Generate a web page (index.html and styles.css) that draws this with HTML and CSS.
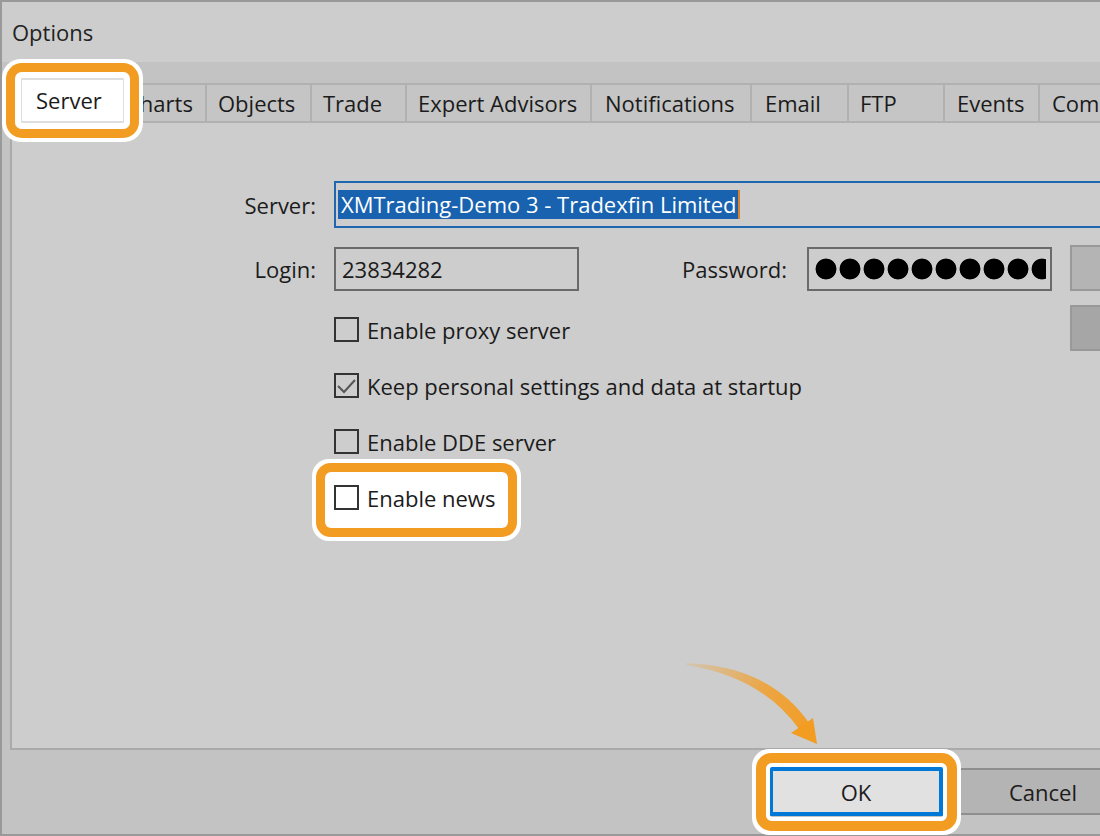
FILE: index.html
```html
<!DOCTYPE html>
<html lang="en">
<head>
<meta charset="utf-8">
<title>Options</title>
<link rel="stylesheet" href="styles.css">
</head>
<body>
<div class="window">
  <div class="titlebar">Options</div>
  <div class="dlg">
    <div class="tabs">
      <div class="tab sel">Server</div>
      <div class="tab t-charts">Charts</div>
      <div class="tab t-objects">Objects</div>
      <div class="tab t-trade">Trade</div>
      <div class="tab t-expert">Expert Advisors</div>
      <div class="tab t-notif">Notifications</div>
      <div class="tab t-email">Email</div>
      <div class="tab t-ftp">FTP</div>
      <div class="tab t-events">Events</div>
      <div class="tab t-comm">Com</div>
    </div>
    <div class="panel">
      <div class="form">
        <div class="lbl l-server">Server:</div>
        <div class="input server"><span class="selection">XMTrading-Demo 3 - Tradexfin Limited</span></div>
        <div class="lbl l-login">Login:</div>
        <div class="input login">23834282</div>
        <div class="lbl l-pw">Password:</div>
        <div class="input pwd"><div class="dots"></div></div>
        <div class="side">
          <div class="sbtn"></div>
          <div class="sbtn dark"></div>
        </div>
        <div class="checks">
          <div class="cb"><span class="box"></span><span>Enable proxy server</span></div>
          <div class="cb"><span class="box"><svg viewBox="0 0 21 21" width="21" height="21"><polyline points="2,11 8,17 19,5" fill="none" stroke="#555" stroke-width="2"/></svg></span><span>Keep personal settings and data at startup</span></div>
          <div class="cb"><span class="box"></span><span>Enable DDE server</span></div>
          <div class="cb hl"><span class="box"></span><span>Enable news</span></div>
        </div>
      </div>
    </div>
    <div class="footer">
      <div class="btn ok">OK</div>
      <div class="btn cancel">Cancel</div>
    </div>
  </div>
</div>
<svg class="arrow" width="1100" height="836" viewBox="0 0 1100 836">
  <defs>
    <linearGradient id="ag" x1="686" y1="664" x2="810" y2="740" gradientUnits="userSpaceOnUse">
      <stop offset="0" stop-color="#f39c22" stop-opacity="0.15"/>
      <stop offset="0.55" stop-color="#f39c22" stop-opacity="0.8"/>
      <stop offset="1" stop-color="#f39c22" stop-opacity="1"/>
    </linearGradient>
  </defs>
  <path d="M686,663 Q770,666 809,723 L799,729 Q762,677 686,665 Z" fill="url(#ag)"/>
  <polygon points="791,733 813,718 817,744" fill="#f39c22"/>
</svg>
</body>
</html>
```
FILE: styles.css
```css
* { box-sizing: border-box; }
html, body { margin: 0; padding: 0; }
body {
  width: 1100px;
  height: 836px;
  overflow: hidden;
  position: relative;
  font-family: "Open Sans", "Noto Sans", sans-serif;
  font-size: 22px;
  color: #1b1b1b;
  background: #c3c3c3;
}
.window {
  width: 1220px;
  height: 836px;
  border: 2px solid #999;
  border-right: none;
  background: #c3c3c3;
  display: flex;
  flex-direction: column;
}
.titlebar {
  height: 60px;
  background: #cdcdcd;
  padding-left: 10px;
  display: flex;
  align-items: center;
  color: #222;
}
.dlg {
  flex: 1;
  padding: 21px 0 0 8px;
  display: flex;
  flex-direction: column;
}
.tabs {
  display: flex;
  align-items: flex-start;
  height: 38px;
  border-top: 2px solid #b1b1b1;
  background: #c5c5c5;
}
.tab {
  flex: none;
  height: 36px;
  border-left: 2px solid #b1b1b1;
  padding-left: 11px;
  display: flex;
  align-items: center;
  white-space: nowrap;
  overflow: hidden;
}
.tab.sel {
  position: relative;
  z-index: 3;
  width: 105px;
  height: 45px;
  margin: -7px -12px 0 10px;
  background: #fff;
  border: 2px solid #dedede;
  padding-left: 14px;
  padding-bottom: 2px;
  overflow: visible;
}
.tab.sel::before {
  content: "";
  position: absolute;
  top: -8px;
  left: -7px;
  right: -7px;
  bottom: -8px;
  border: 6px solid #fff;
  border-radius: 7px;
  box-shadow: 0 0 0 9px #f39c22, 0 0 0 13px #fff;
}
.t-charts { width: 92px; }
.t-objects { width: 105px; }
.t-trade { width: 95px; }
.t-expert { width: 185px; }
.t-notif { width: 160px; padding-left: 13px; }
.t-email { width: 97px; padding-left: 13px; }
.t-ftp { width: 96px; }
.t-events { width: 95px; padding-left: 12px; }
.t-comm { width: 62px; padding-left: 12px; }

.panel {
  height: 629px;
  background: #cdcdcd;
  border-top: 2px solid #b1b1b1;
  border-left: 2px solid #aaa;
  border-bottom: 2px solid #aaa;
  padding-top: 58px;
}
.form {
  display: grid;
  grid-template-columns: 304px 18px 245px 228px 245px 18px 100px;
  align-items: center;
}
.lbl {
  text-align: right;
  white-space: nowrap;
}
.l-server { grid-column: 1; grid-row: 1; }
.l-login { grid-column: 1; grid-row: 2; margin-top: 17px; padding-top: 2px; }
.l-pw { grid-column: 4; grid-row: 2; padding-right: 20px; margin-top: 17px; padding-top: 2px; }
.input {
  white-space: nowrap;
  overflow: hidden;
  display: flex;
  align-items: center;
}
.server {
  grid-column: 3 / span 5;
  grid-row: 1;
  height: 47px;
  border: 2px solid #1e66b0;
  padding-left: 2px;
}
.selection {
  background: #1862b0;
  color: #fff;
  line-height: 29px;
  padding: 0 1px 0 3px;
  border-right: 2px solid #d9822b;
}
.login {
  grid-column: 3;
  grid-row: 2;
  margin-top: 19px;
  height: 44px;
  border: 2px solid #6a6a6a;
  padding-left: 6px;
}
.pwd {
  grid-column: 5;
  grid-row: 2;
  margin-top: 19px;
  height: 44px;
  border: 2px solid #6a6a6a;
  padding: 0 4px 0 6px;
}
.dots {
  width: 100%;
  height: 22px;
  background: radial-gradient(circle at 11px 11px, #000 10px, transparent 10.8px) 0 0 / 24px 22px repeat-x;
}
.side {
  grid-column: 7;
  grid-row: 2 / span 2;
  align-self: start;
  margin-top: 17px;
  display: flex;
  flex-direction: column;
  gap: 14px;
}
.sbtn {
  height: 46px;
  background: #b4b4b4;
  border: 2px solid #999;
}
.sbtn.dark { background: #a6a6a6; }
.checks {
  grid-column: 3 / span 3;
  grid-row: 3;
  align-self: start;
  padding-top: 26px;
  display: flex;
  flex-direction: column;
  align-items: flex-start;
  gap: 31px;
}
.cb {
  display: flex;
  align-items: center;
  gap: 8px;
  height: 25px;
  white-space: nowrap;
  position: relative;
  isolation: isolate;
}
.box {
  width: 25px;
  height: 25px;
  border: 2px solid #333;
  display: flex;
  align-items: center;
  justify-content: center;
}
.cb.hl::before {
  content: "";
  position: absolute;
  z-index: -1;
  top: -13px;
  left: -9px;
  right: -13px;
  bottom: -18px;
  background: #fff;
  border-radius: 6px;
  box-shadow: 0 0 0 9px #f39c22, 0 0 0 13px #fff;
}
.footer {
  display: flex;
  padding: 17px 0 0 759px;
  gap: 13px;
}
.btn {
  height: 49px;
  width: 174px;
  display: flex;
  align-items: center;
  justify-content: center;
  flex: none;
}
.ok {
  position: relative;
  background: #e1e1e1;
  border: 4px solid #0078d7;
}
.ok::before {
  content: "";
  position: absolute;
  top: -8px;
  left: -7px;
  right: -8px;
  bottom: -9px;
  border: 4px solid #fff;
  border-radius: 6px;
  box-shadow: 0 0 0 10px #f39c22, 0 0 0 14px #fff;
}
.cancel {
  margin-top: 1px;
  height: 47px;
  background: #b4b4b4;
  border-top: 2px solid #8e8e8e;
  border-bottom: 2px solid #8e8e8e;
}
.arrow {
  position: absolute;
  left: 0;
  top: 0;
  pointer-events: none;
}
```
